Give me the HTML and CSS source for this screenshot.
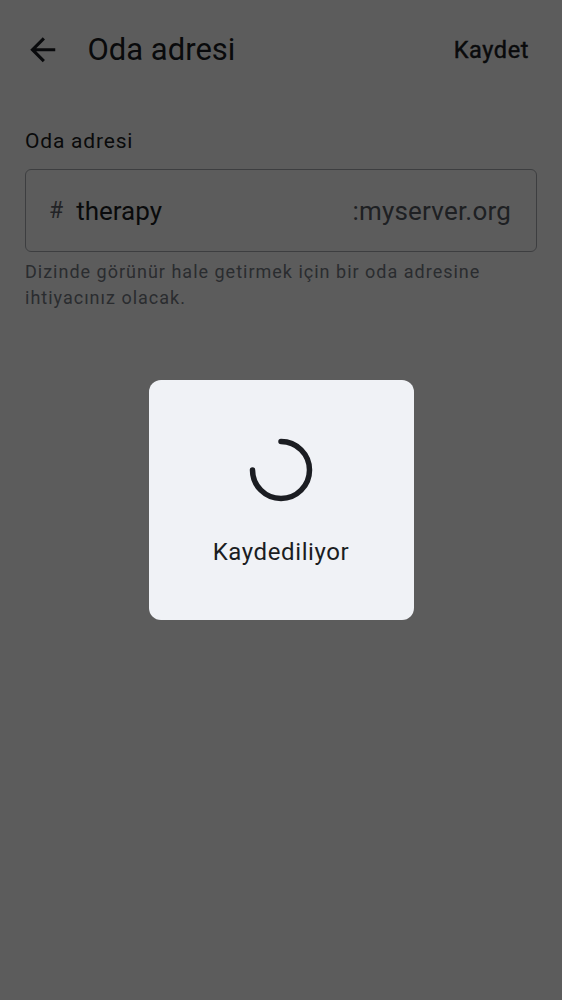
FILE: index.html
```html
<!DOCTYPE html>
<html lang="tr">
<head>
<meta charset="utf-8">
<title>Oda adresi</title>
<link rel="stylesheet" href="styles.css">
</head>
<body>
<div class="screen">
  <header class="topbar">
    <button class="back" aria-label="Geri">
      <svg viewBox="0 0 24 24" width="37.5" height="37.5"><path d="M20 11H7.83l5.59-5.59L12 4l-8 8 8 8 1.41-1.41L7.83 13H20v-2z" fill="#1b1d22"/></svg>
    </button>
    <h1 class="title">Oda adresi</h1>
    <span class="save">Kaydet</span>
  </header>
  <main class="content">
    <div class="label">Oda adresi</div>
    <div class="field">
      <span class="hash">#</span>
      <span class="value">therapy</span>
      <span class="suffix">:myserver.org</span>
    </div>
    <p class="hint">Dizinde görünür hale getirmek için bir oda adresine ihtiyacınız olacak.</p>
  </main>
</div>
<div class="scrim">
  <div class="dialog">
    <svg class="spinner" viewBox="0 0 64 64" width="64" height="64"><path d="M32 3.5 A28.5 28.5 0 1 1 3.5 32" fill="none" stroke="#1b1d22" stroke-width="5.5" stroke-linecap="round"/></svg>
    <div class="dialog-text">Kaydediliyor</div>
  </div>
</div>
</body>
</html>
```
FILE: styles.css
```css
html, body {
  margin: 0;
  padding: 0;
  background: #ffffff;
  font-family: Roboto, "Noto Sans", "Liberation Sans", sans-serif;
  color: #1b1d22;
}
.screen {
  width: 562px;
  height: 1000px;
}
.topbar {
  height: 100px;
  display: flex;
  align-items: center;
  padding: 0 33px 0 24px;
  box-sizing: border-box;
}
.back {
  border: none;
  background: none;
  padding: 0;
  width: 37.5px;
  height: 37.5px;
  display: flex;
  align-items: center;
  justify-content: center;
}
.back svg { display: block; }
.title {
  margin: 0 0 0 26px;
  font-size: 31px;
  font-weight: 400;
  line-height: 36px;
  flex: 1;
}
.save {
  font-size: 23.5px;
  font-weight: 400;
  line-height: 28px;
  letter-spacing: 0.6px;
  -webkit-text-stroke: 0.45px #1b1d22;
}
.content {
  padding: 27px 25px 0 25px;
}
.label {
  font-size: 21px;
  line-height: 28px;
  letter-spacing: 0.8px;
  color: #1b1d22;
}
.field {
  margin-top: 14px;
  height: 83px;
  box-sizing: border-box;
  border: 1.5px solid #a9acb2;
  border-radius: 6px;
  display: flex;
  align-items: center;
  padding: 0 25px 0 23px;
}
.hash {
  font-size: 23px;
  color: #5f636b;
  margin-right: 13px;
}
.value {
  font-size: 26px;
  flex: 1;
  color: #1b1d22;
}
.suffix {
  font-size: 26px;
  color: #555961;
  letter-spacing: 0.2px;
}
.hint {
  margin: 7px 0 0 0;
  font-size: 18px;
  line-height: 26px;
  letter-spacing: 1px;
  color: #767b84;
}
.scrim {
  position: fixed;
  inset: 0;
  background: rgba(0, 0, 0, 0.64);
  display: flex;
  align-items: center;
  justify-content: center;
}
.dialog {
  width: 265px;
  height: 240px;
  box-sizing: border-box;
  background: #f0f2f6;
  border-radius: 12px;
  display: flex;
  flex-direction: column;
  align-items: center;
  padding-top: 58px;
}
.spinner { display: block; }
.dialog-text {
  margin-top: 36px;
  font-size: 24px;
  line-height: 28px;
  letter-spacing: 0.6px;
  color: #1b1d22;
}
```
